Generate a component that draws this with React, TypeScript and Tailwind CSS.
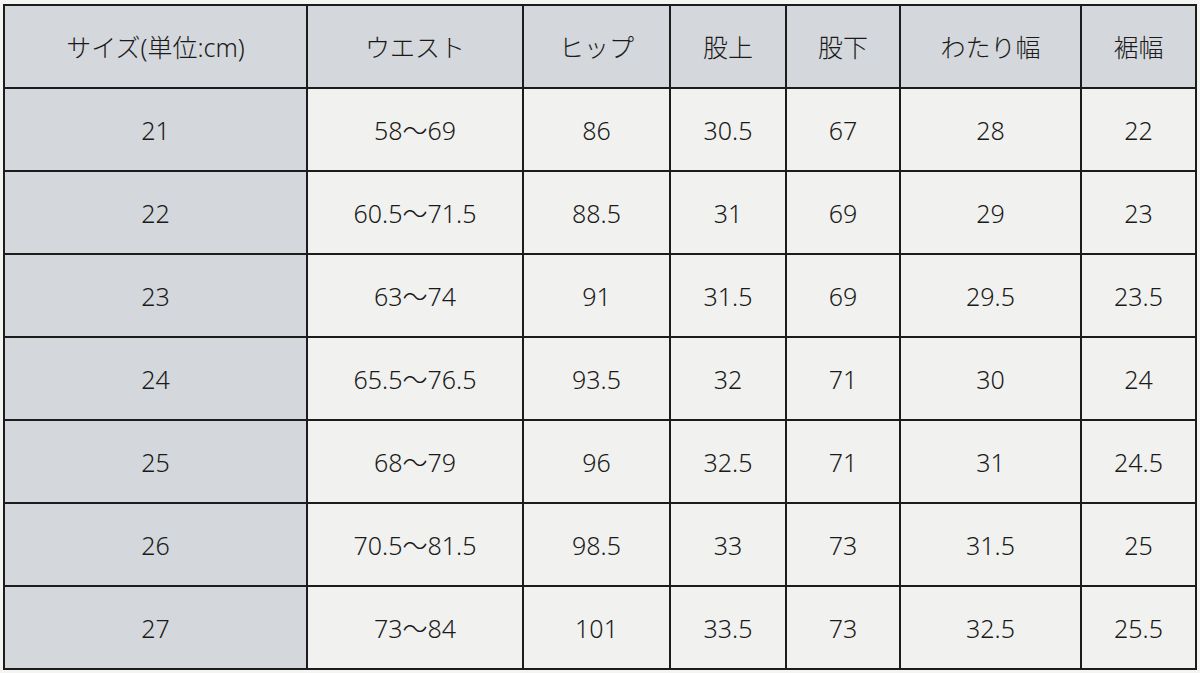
import React from 'react';

const HEADERS = ['サイズ(単位:cm)', 'ウエスト', 'ヒップ', '股上', '股下', 'わたり幅', '裾幅'];

const ROWS = [
  ['21', '58〜69', '86', '30.5', '67', '28', '22'],
  ['22', '60.5〜71.5', '88.5', '31', '69', '29', '23'],
  ['23', '63〜74', '91', '31.5', '69', '29.5', '23.5'],
  ['24', '65.5〜76.5', '93.5', '32', '71', '30', '24'],
  ['25', '68〜79', '96', '32.5', '71', '31', '24.5'],
  ['26', '70.5〜81.5', '98.5', '33', '73', '31.5', '25'],
  ['27', '73〜84', '101', '33.5', '73', '32.5', '25.5'],
];

const SizeTable: React.FC = () => {
  return (
    <div
      className="min-h-screen w-full bg-[#f4f4f2] pt-1 pl-[3px]"
      style={{ fontFamily: '"Noto Sans", "Noto Sans CJK JP", sans-serif' }}
    >
      <div className="grid w-[1194px] grid-cols-[301px_214px_145px_114px_112px_179px_113px] auto-rows-[81px] gap-[2px] bg-[#1c1c1c] p-[2px] text-[25px] font-light text-[#1a1a1a]">
        {HEADERS.map((h) => (
          <div key={h} className="flex items-center justify-center bg-[#d4d7db] pt-[3px]">
            {h}
          </div>
        ))}
        {ROWS.map((row) =>
          row.map((cell, i) => (
            <div
              key={`${row[0]}-${i}`}
              className={
                i === 0
                  ? 'flex items-center justify-center bg-[#d4d7db] pt-[3px]'
                  : 'flex items-center justify-center bg-[#f1f1ef] pt-[3px]'
              }
            >
              {cell}
            </div>
          ))
        )}
      </div>
    </div>
  );
};

export default function App() {
  return <SizeTable />;
}
